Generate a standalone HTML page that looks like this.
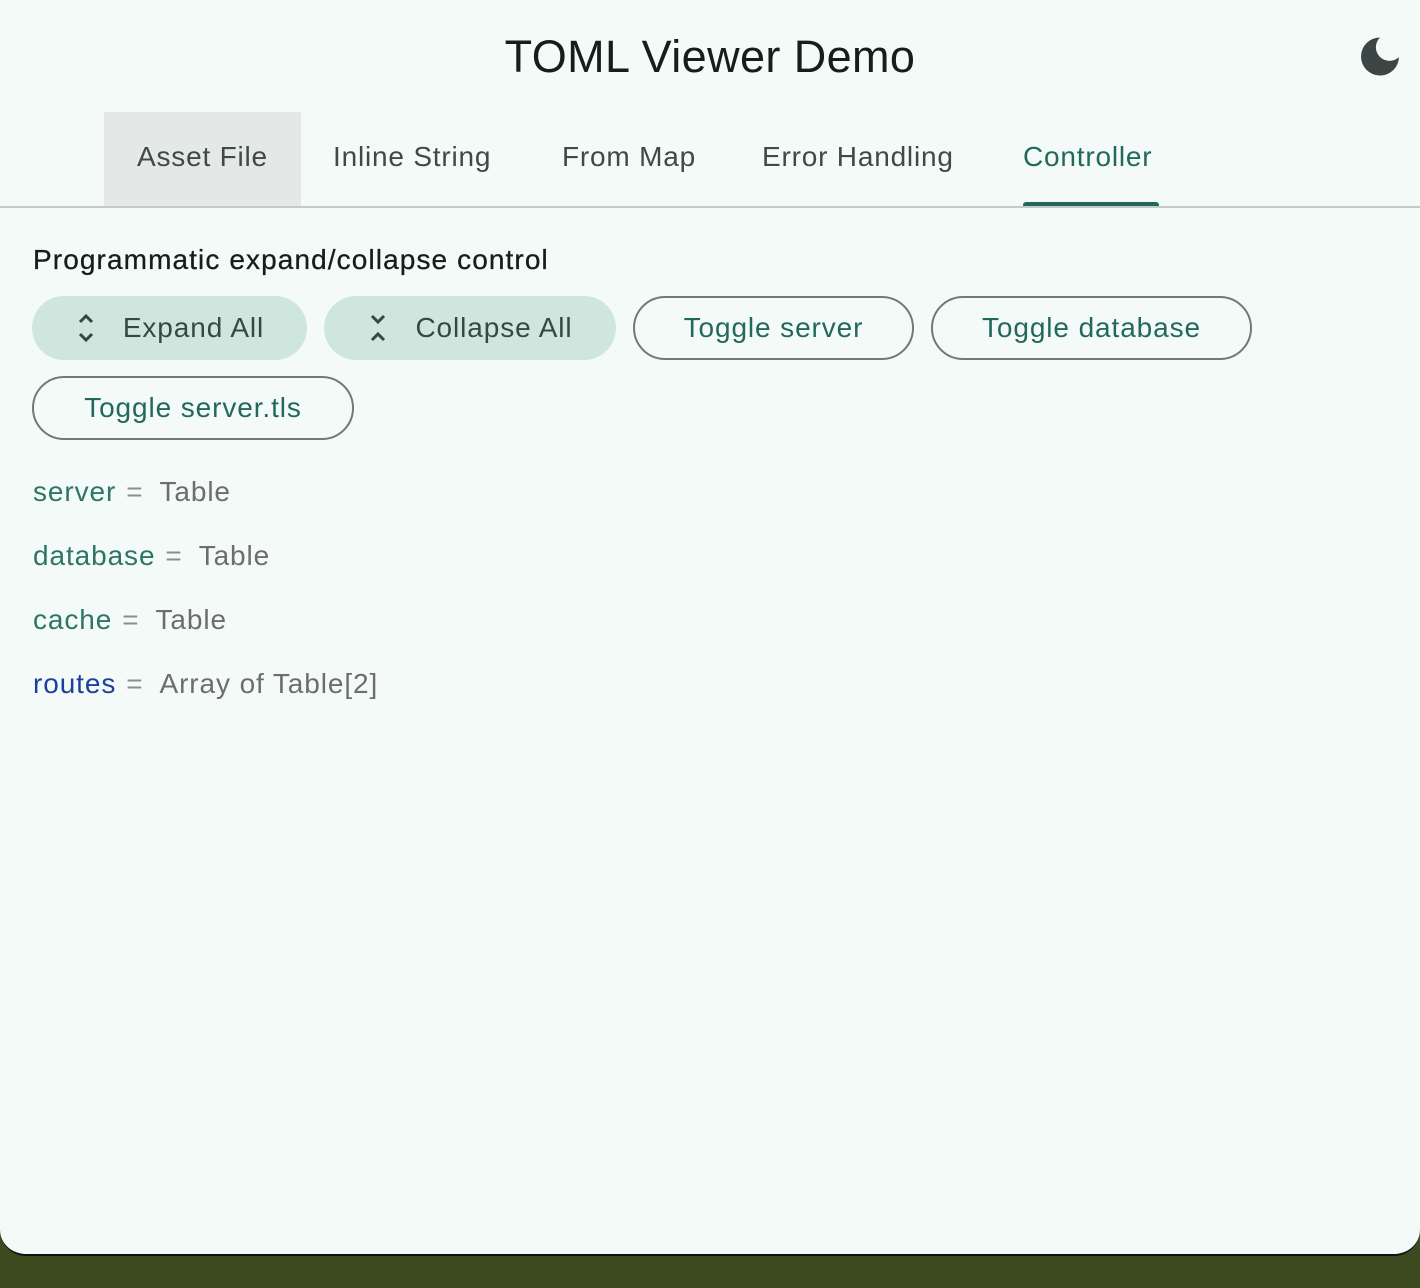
<!DOCTYPE html>
<html><head><meta charset="utf-8"><style>
*{margin:0;padding:0;box-sizing:border-box}
html,body{width:1420px;height:1288px;overflow:hidden}
body{background:linear-gradient(180deg,#2e3a18 0%,#3c4a20 100%);font-family:"Liberation Sans",sans-serif;position:relative}
.win{position:absolute;left:0;top:0;width:1420px;height:1256px;background:#f4faf8;border-radius:0 0 26px 26px;border-bottom:2px solid #111}
.a{position:absolute;white-space:nowrap}
.title{left:0;width:1420px;text-align:center;top:31px;font-size:45px;color:#171d1b;letter-spacing:0.4px}
.tab{top:141px;font-size:28px;color:#3f4946;letter-spacing:0.8px}
.btn{position:absolute;height:64px;border-radius:32px;font-size:28px;display:flex;align-items:center;justify-content:center;letter-spacing:0.9px}
.tonal{background:#cfe6df;color:#334a44}
.out{border:2px solid #6f7976;color:#22695b}
.row{left:33px;font-size:28px;letter-spacing:0.9px}
.k{color:#2d7565}.eq{color:#8a8f8d;margin:0 16px 0 10px}.v{color:#6b6e6d}
</style></head><body>
<div class="win">
<div class="a title">TOML Viewer Demo</div>
<svg class="a" style="left:1360px;top:36px" width="40" height="40" viewBox="0 0 40 40"><path d="M20 1.5 A19 19 0 1 0 39 21 A12.5 12.5 0 0 1 20 1.5 Z" fill="#3c4644"/></svg>
<div class="a" style="left:104px;top:112px;width:197px;height:94px;background:#e4e9e7"></div>
<div class="a tab" style="left:137px">Asset File</div>
<div class="a tab" style="left:333px">Inline String</div>
<div class="a tab" style="left:562px">From Map</div>
<div class="a tab" style="left:762px">Error Handling</div>
<div class="a tab" style="left:1023px;color:#22695b">Controller</div>
<div class="a" style="left:1023px;top:202px;width:136px;height:5px;background:#22695b;border-radius:3px 3px 0 0"></div>
<div class="a" style="left:0;top:206px;width:1420px;height:2px;background:#c4cac7"></div>
<div class="a" style="left:33px;top:244px;font-size:28px;color:#171d1b;letter-spacing:1.1px;-webkit-text-stroke:0.3px #171d1b">Programmatic expand/collapse control</div>
<div class="btn tonal" style="left:32px;top:296px;width:275px"><svg width="22" height="32" viewBox="0 0 22 32" style="margin-right:26px"><path d="M5 10 L11 4 L17 10 M5 22 L11 28 L17 22" stroke="#334a44" stroke-width="3" fill="none"/></svg>Expand All</div>
<div class="btn tonal" style="left:324px;top:296px;width:292px"><svg width="22" height="32" viewBox="0 0 22 32" style="margin-right:26px"><path d="M5 4 L11 10 L17 4 M5 28 L11 22 L17 28" stroke="#334a44" stroke-width="3" fill="none"/></svg>Collapse All</div>
<div class="btn out" style="left:633px;top:296px;width:281px">Toggle server</div>
<div class="btn out" style="left:931px;top:296px;width:321px">Toggle database</div>
<div class="btn out" style="left:32px;top:376px;width:322px">Toggle server.tls</div>
<div class="a row" style="top:476px"><span class="k">server</span><span class="eq">=</span><span class="v">Table</span></div>
<div class="a row" style="top:540px"><span class="k">database</span><span class="eq">=</span><span class="v">Table</span></div>
<div class="a row" style="top:604px"><span class="k">cache</span><span class="eq">=</span><span class="v">Table</span></div>
<div class="a row" style="top:668px"><span class="k" style="color:#1d3f9e">routes</span><span class="eq">=</span><span class="v">Array of Table[2]</span></div>
</div>
</body></html>
